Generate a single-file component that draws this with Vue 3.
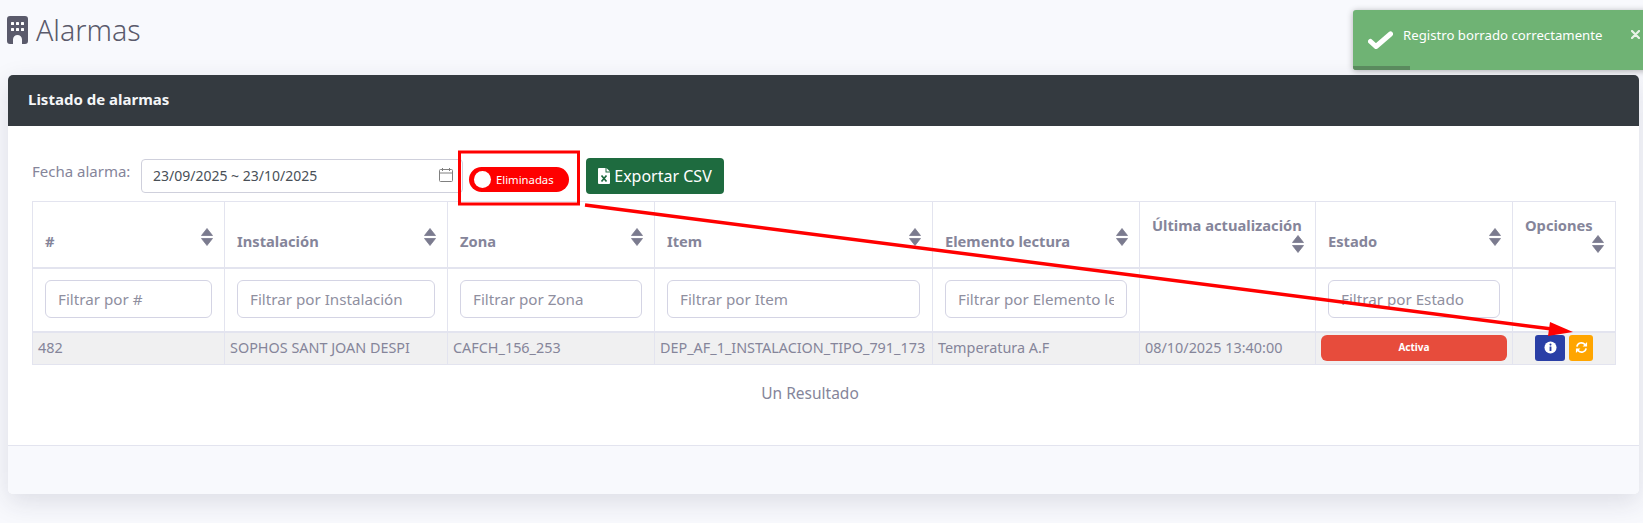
<script setup>
const cols = [
  { label: '#', w: 192, ph: 'Filtrar por #' },
  { label: 'Instalación', w: 223, ph: 'Filtrar por Instalación' },
  { label: 'Zona', w: 207, ph: 'Filtrar por Zona' },
  { label: 'Item', w: 278, ph: 'Filtrar por Item' },
  { label: 'Elemento lectura', w: 207, ph: 'Filtrar por Elemento lectura' },
  { label: 'Última actualización', w: 176, wrap: true },
  { label: 'Estado', w: 197, ph: 'Filtrar por Estado' },
  { label: 'Opciones', w: 103, wrap: true },
]
const row = ['482', 'SOPHOS SANT JOAN DESPI', 'CAFCH_156_253', 'DEP_AF_1_INSTALACION_TIPO_791_173', 'Temperatura A.F', '08/10/2025 13:40:00']
</script>

<template>
  <div class="page">
    <h1 class="title">
      <svg class="bicon" viewBox="0 0 21 28" aria-hidden="true">
        <path fill="#5a5a6b" fill-rule="evenodd" d="M3 0h15a3 3 0 0 1 3 3v22a3 3 0 0 1-3 3h-3v-4.500a4.500 4.500 0 0 0-9 0V28H3a3 3 0 0 1-3-3V3a3 3 0 0 1 3-3z" />
        <g fill="#fff">
          <rect x="4" y="6" width="3" height="3" rx=".6" /><rect x="9" y="6" width="3" height="3" rx=".6" /><rect x="14" y="6" width="3" height="3" rx=".6" />
          <rect x="4" y="12" width="3" height="3" rx=".6" /><rect x="9" y="12" width="3" height="3" rx=".6" /><rect x="14" y="12" width="3" height="3" rx=".6" />
        </g>
      </svg>
      Alarmas
    </h1>

    <section class="card">
      <header class="card-head">Listado de alarmas</header>
      <div class="card-body">
        <div class="filters">
          <label class="flabel">Fecha alarma:</label>
          <div class="date">
            <span>23/09/2025 ~ 23/10/2025</span>
            <svg class="cal" viewBox="0 0 16 16" fill="none" stroke="#808080" stroke-width="1">
              <rect x="1.500" y="2.500" width="13" height="12" rx="1" /><path d="M1.500 6h13M4.500 1v3M11.500 1v3" />
            </svg>
          </div>
          <div class="toggle"><i class="knob"></i><span>Eliminadas</span></div>
          <button class="export">
            <svg class="xls" viewBox="0 0 12 16">
              <path fill="#fff" d="M1 0h6.500v4.500H12V15a1 1 0 0 1-1 1H1a1 1 0 0 1-1-1V1a1 1 0 0 1 1-1zM8.500 0L12 3.500H8.500z" />
              <path stroke="#1e6b3f" stroke-width="1.700" d="M3.500 7.500l5 6M8.500 7.500l-5 6" />
            </svg>
            Exportar CSV
          </button>
        </div>

        <table class="grid">
          <colgroup><col v-for="c in cols" :key="c.label" :style="{ width: c.w + 'px' }" /></colgroup>
          <thead>
            <tr class="heads">
              <th v-for="c in cols" :key="c.label">
                <div class="th-in" :class="{ wrapped: c.wrap }">
                  <span>{{ c.label }}</span>
                  <svg class="sort" viewBox="0 0 12 18">
                    <path fill="#7b7b8f" d="M6 0.500L11.500 7.500H0.500zM6 17.500L0.500 10.500H11.500z" stroke="#7b7b8f" stroke-linejoin="round" stroke-width=".8" />
                  </svg>
                </div>
              </th>
            </tr>
            <tr class="frow">
              <th v-for="c in cols" :key="c.label + 'f'">
                <input v-if="c.ph" class="finput" :placeholder="c.ph" />
              </th>
            </tr>
          </thead>
          <tbody>
            <tr class="drow">
              <td v-for="v in row" :key="v">{{ v }}</td>
              <td class="st"><span class="badge">Activa</span></td>
              <td class="opts">
                <button class="op info">
                  <svg viewBox="0 0 14 14" width="13" height="13"><circle cx="7" cy="7" r="6.500" fill="#fff" /><rect x="6" y="5.800" width="2" height="5" rx=".4" fill="#2a3fa6" /><circle cx="7" cy="3.900" r="1.100" fill="#2a3fa6" /></svg>
                </button>
                <button class="op sync">
                  <svg viewBox="0 0 14 14" width="13" height="13" fill="none" stroke="#fff" stroke-width="1.800">
                    <path d="M2 6a5 5 0 0 1 8.600-2.400L12 5" /><path d="M12 8a5 5 0 0 1-8.600 2.400L2 9" />
                    <path fill="#fff" stroke="none" d="M13 1.200V6H8.200zM1 12.800V8h4.800z" />
                  </svg>
                </button>
              </td>
            </tr>
          </tbody>
        </table>
        <p class="result">Un Resultado</p>
      </div>
      <footer class="card-foot"></footer>
    </section>

    <svg class="annot" width="1643" height="523" viewBox="0 0 1643 523">
      <rect x="459.500" y="152" width="119" height="52" fill="none" stroke="#ff0000" stroke-width="3" />
      <path d="M585 205L1552 329" stroke="#ff0000" stroke-width="3.500" fill="none" />
      <path d="M1550 322L1573 332L1548 336z" fill="#ff0000" />
    </svg>

    <div class="toast">
      <svg class="check" viewBox="0 0 25 18"><path d="M2.500 10.500l5.500 5L22.500 3" fill="none" stroke="#fff" stroke-width="5" stroke-linecap="round" stroke-linejoin="round" /></svg>
      <span class="tmsg">Registro borrado correctamente</span>
      <svg class="tclose" viewBox="0 0 9 9"><path d="M1 1l7 7M8 1l-7 7" stroke="#e8f2e8" stroke-width="2.200" stroke-linecap="round" /></svg>
      <i class="tbar"></i>
    </div>
  </div>
</template>

<style>
html, body { margin: 0; background: #f8f9fd; }
</style>

<style scoped>
.page { position: relative; width: 1643px; height: 523px; overflow: hidden; background: #f8f9fd; font-family: "Noto Sans", "Open Sans", sans-serif; color: #7d7d8e; padding: 0 4px 0 8px; box-sizing: border-box; }
.title { position: absolute; left: 7px; top: 16px; margin: 0; display: flex; align-items: center; gap: 8px; height: 28px; font-size: 28.5px; font-weight: 300; color: #5a5a6b; }
.bicon { width: 21px; height: 28px; }
.card { margin-top: 75px; background: #fff; border-radius: 5px; box-shadow: 0 8px 26px rgba(40, 40, 70, .13); overflow: hidden; height: 419px; width: 1631px; display: flex; flex-direction: column; }
.card-head { height: 51px; flex: none; background: #343a40; color: #f4f6f8; font-size: 15px; font-weight: 700; line-height: 49px; padding-left: 20px; box-sizing: border-box; }
.card-body { flex: 1; padding: 32px 24px 0; }
.filters { display: flex; align-items: flex-start; height: 43px; position: relative; }
.flabel { width: 109px; font-size: 15px; line-height: 20px; margin-top: 3px; color: #85859a; flex: none; white-space: nowrap; }
.date { width: 322px; height: 34px; flex: none; box-sizing: border-box; border: 1px solid #cfd0dc; border-radius: 4px; display: flex; align-items: center; justify-content: space-between; padding: 0 8px 2px 11px; font-size: 14px; color: #495057; margin-top: 1px; }
.cal { width: 16px; height: 16px; }
.toggle { margin: 9px 0 0 6px; width: 100px; height: 25px; flex: none; background: #f00; border-radius: 13px; display: flex; align-items: center; color: #fff; font-size: 11.300px; }
.knob { width: 17px; height: 17px; border-radius: 50%; background: #fff; margin: 0 5px 0 5px; }
.export { margin: 0 0 0 17px; width: 138px; height: 36px; flex: none; border: 0; border-radius: 4px; background: #1e6b3f; color: #fff; font: 16px "Noto Sans", sans-serif; display: flex; align-items: center; justify-content: center; gap: 4px; padding: 0; }
.xls { width: 12px; height: 16px; }
.grid { table-layout: fixed; border-collapse: collapse; width: 1583px; margin: 0; }
.grid th, .grid td { border: 1px solid #e3e4ef; box-sizing: border-box; }
.heads { height: 66px; }
.heads th { border-bottom-width: 2px; vertical-align: bottom; padding: 0 11px 16px 12px; text-align: left; font-size: 14.700px; font-weight: 700; color: #85859a; }
.th-in { display: flex; align-items: flex-end; justify-content: space-between; }
.th-in.wrapped { flex-wrap: wrap; justify-content: flex-end; margin-bottom: -7px; }
.th-in span { white-space: nowrap; line-height: 20px; }
.th-in.wrapped span { flex: 0 0 100%; }
.sort { width: 12px; height: 18px; flex: none; margin-bottom: 5px; }
.frow { height: 64px; }
.frow th { padding: 0 12px 2px; border-bottom-width: 2px; vertical-align: middle; }
.finput { width: 100%; height: 38px; box-sizing: border-box; border: 1px solid #d4d4e4; border-radius: 6px; padding: 0 12px; font: 15.200px "Noto Sans", sans-serif; outline: 0; background: #fff; color: #7d7d8e; display: block; }
.finput::placeholder { color: #8f8f9f; opacity: 1; }
.drow { height: 33px; background: #f0f0f1; }
.drow td { padding: 0 5px 1px; font-size: 14.400px; white-space: nowrap; overflow: hidden; color: #85859a; }
.drow .st { padding: 0 5px; }
.badge { display: block; height: 26px; line-height: 24px; border-radius: 6px; background: #e74c3c; color: #fff; text-align: center; font-size: 10px; font-weight: 700; }
.opts { text-align: center; }
.op { display: inline-flex; align-items: center; justify-content: center; height: 26px; border: 0; border-radius: 3px; padding: 0; vertical-align: middle; }
.info { width: 30px; background: #2a3fa6; margin-right: 4px; }
.sync { width: 24px; background: #ffa500; }
.result { margin: 18px 0 0; padding-right: 27px; text-align: center; font-size: 15.500px; line-height: 20px; color: #85859a; }
.card-foot { height: 49px; flex: none; background: #f8f9fd; border-top: 1px solid #e3e4ef; box-sizing: border-box; }
.annot { position: absolute; left: 0; top: 0; pointer-events: none; }
.toast { position: absolute; left: 1353px; top: 10px; width: 300px; height: 60px; background: #6fb374; border-radius: 3px 0 0 3px; box-shadow: 0 1px 6px rgba(0, 0, 0, .3); color: #fff; font-size: 13.200px; overflow: hidden; }
.check { position: absolute; left: 15px; top: 21px; width: 25px; height: 18px; }
.tmsg { position: absolute; left: 50px; top: 16px; line-height: 18px; white-space: nowrap; }
.tclose { position: absolute; left: 278px; top: 20px; width: 9px; height: 9px; }
.tbar { position: absolute; left: 0; bottom: 0; width: 57px; height: 4px; background: #5a8a5e; }
</style>
